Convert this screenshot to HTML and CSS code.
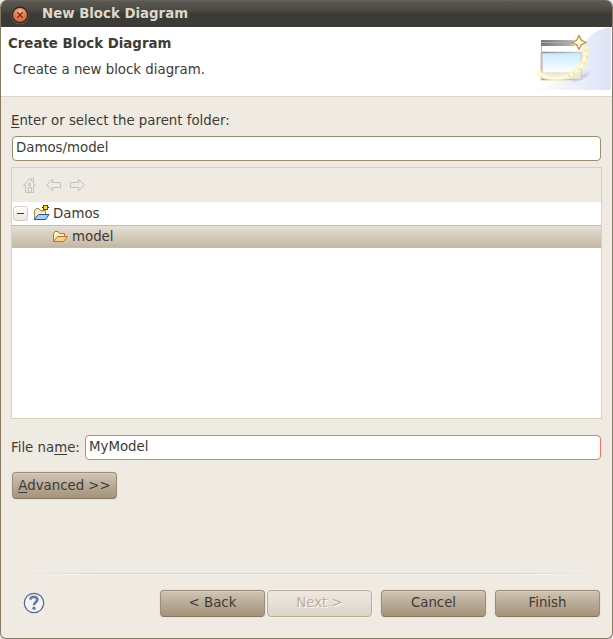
FILE: index.html
```html
<!DOCTYPE html>
<html lang="en">
<head>
<meta charset="utf-8">
<title>New Block Diagram</title>
<link rel="stylesheet" href="styles.css">
</head>
<body>
<main class="window">
  <div class="titlebar">
    <svg class="close" width="20" height="20" viewBox="0 0 20 20">
      <defs><radialGradient id="cl" cx=".5" cy=".25" r=".8"><stop offset="0" stop-color="#ffb894"/><stop offset=".5" stop-color="#f37b50"/><stop offset="1" stop-color="#d65329"/></radialGradient></defs>
      <circle cx="10" cy="10.5" r="8.8" fill="#64605a"/>
      <circle cx="10" cy="10" r="8.4" fill="#2c2a28"/>
      <circle cx="10" cy="10" r="7" fill="url(#cl)"/>
      <path d="M7.3 7.3l5.4 5.4M12.7 7.3l-5.4 5.4" stroke="#5b3b31" stroke-width="1.5"/>
    </svg>
    <span class="title">New Block Diagram</span>
  </div>
  <header class="banner">
    <div>
      <h1>Create Block Diagram</h1>
      <p>Create a new block diagram.</p>
    </div>
    <svg class="art" width="83" height="66" viewBox="0 0 83 66">
      <defs>
        <linearGradient id="bg" x1="0" y1="0" x2="1" y2="0"><stop offset="0" stop-color="#fff"/><stop offset=".55" stop-color="#edf1fb"/><stop offset="1" stop-color="#dbe3f5"/></linearGradient>
        <linearGradient id="bar"><stop offset="0" stop-color="#777"/><stop offset="1" stop-color="#c9c9c9"/></linearGradient>
        <linearGradient id="sky" x1="0" y1="0" x2="0" y2="1"><stop offset="0" stop-color="#c8ecff"/><stop offset="1" stop-color="#fbfeff"/></linearGradient>
        <linearGradient id="fr"><stop offset="0" stop-color="#8e8e8e"/><stop offset="1" stop-color="#cfcfcb"/></linearGradient>
        <filter id="soft" x="-20%" y="-20%" width="140%" height="140%"><feGaussianBlur stdDeviation="1.3"/></filter>
      </defs>
      <path d="M0 63Q36 60 48 31Q58 2 82 0V63Z" fill="url(#bg)"/>
      <path d="M43 53L62 44L57 50L44 55Z" fill="#c9c4dc" filter="url(#soft)"/>
      <rect x="12" y="13" width="41" height="40" fill="#fff"/>
      <rect x="12" y="13" width="41" height="6" fill="url(#bar)"/>
      <path d="M12 15.5H50" stroke="#aaa"/>
      <rect x="12.5" y="25.5" width="40" height="27" fill="#e9e6dc" stroke="url(#fr)" stroke-width="1.5"/>
      <path d="M12.5 19V53" stroke="#bbb"/>
      <rect x="14" y="27" width="37" height="18" fill="url(#sky)"/>
      <path d="M9 45Q17 53 32 51Q58 46 57 20" fill="none" stroke="#fdf5c0" stroke-width="5" filter="url(#soft)"/>
      <path d="M10 46Q18 53 32 51Q57 46 57 22" fill="none" stroke="#fffce0" stroke-width="1.8"/>
      <path d="M57 22v3M55.5 23.5h3M58 29v3M56.5 30.5h3M55 35v3M53.5 36.5h3M50 41v3M48.5 42.5h3M45 45v3M43.5 46.5h3M40 47v3M38.5 48.5h3" stroke="#f6dda0" stroke-width="1.1"/>
      <circle cx="50" cy="15" r="6" fill="#fff6d6" filter="url(#soft)"/>
      <path d="M50 8.5L52.3 13.2L57 15.5L52.3 17.8L50 22.5L47.7 17.8L43 15.5L47.7 13.2Z" fill="#fffbe9" stroke="#bd8b35" stroke-width="1.2"/>
    </svg>
  </header>
  <section class="content">
    <label class="folder-label"><u>E</u>nter or select the parent folder:</label>
    <div class="field">Damos/model</div>
    <div class="browser">
      <div class="tools">
        <svg width="66" height="18" viewBox="0 0 66 18" fill="none" stroke="#c4c1bb">
          <path d="M1.5 9.5L7.5 2.5L13.5 9.5H11.5V16.5H3.5V9.5ZM11.5 6V2.5H9.5V4.5M6.5 16V11.5H9.5V16M6.500 7.500h2v2h-2Z"/>
          <path d="M24.500 9L30.500 3.500V6.500H38.500V11.500H30.500V14.500Z"/>
          <path d="M62.500 9L56.500 3.500V6.500H48.500V11.500H56.500V14.500Z"/>
        </svg>
      </div>
      <div class="row">
        <span class="toggle"></span>
        <svg class="project" width="17" height="16" viewBox="0 0 17 16">
          <path d="M1.5 13.500V5.500L3 3.500H6L7.500 5.500H12.500V9" fill="#f8dfa0" stroke="#aa8b55"/>
          <path d="M3.500 5.500H6L7 7.500H12V9H5L2.500 12Z" fill="#fff2c8"/>
          <path d="M1 14.500L5.500 9.500H16L12.500 14.500Z" fill="#a9ceff" stroke="#2552a5"/>
          <path d="M9 2.500H16" stroke="#222"/><rect x="10.500" y=".5" width="4" height="4" fill="#ffe000" stroke="#65500b"/>
        </svg>
        <span>Damos</span>
      </div>
      <div class="row selected">
        <svg class="folder" width="17" height="14" viewBox="0 0 17 14">
          <path d="M1.500 11.500V3.500L3 1.500H6L7.500 3.500H12.500V6.500" fill="#fff0c4" stroke="#b77725"/>
          <path d="M1.500 11.500L5.500 6.500H15.500L11.500 11.500Z" fill="#fbd28a" stroke="#b77725"/>
        </svg>
        <span>model</span>
      </div>
    </div>
    <div class="file-row">
      <label>File na<u>m</u>e:</label>
      <div class="field invalid">MyModel</div>
    </div>
    <div class="button"><span><u>A</u>dvanced &gt;&gt;</span></div>
  </section>
  <footer>
    <svg class="help" width="22" height="22" viewBox="0 0 22 22">
      <circle cx="11" cy="11" r="9.700" fill="#f5f5f5" stroke="#536790" stroke-width="1.2"/>
      <path d="M7.300 7.500C7.800 3.900 14.600 3.900 14.300 7.900C14.200 10.400 11 10.200 11 13.200" fill="none" stroke="#657cab" stroke-width="2.700"/>
      <circle cx="11" cy="16.200" r="1.700" fill="#657cab"/>
    </svg>
    <div class="button back">&lt; Back</div>
    <div class="button disabled">Next &gt;</div>
    <div class="button cancel">Cancel</div>
    <div class="button finish">Finish</div>
  </footer>
</main>
</body>
</html>
```
FILE: styles.css
```css
* { box-sizing: border-box; }
body { margin: 0; background: #e9e5dd; font: 13.333px/20px "DejaVu Sans", sans-serif; color: #3c3b37; }
.window { width: 613px; height: 639px; display: flex; flex-direction: column; background: #efebe3; border: 1px solid #897960; border-top: 0; border-radius: 7px 7px 6px 6px; overflow: hidden; }
.titlebar { height: 27px; flex: none; display: flex; align-items: center; padding: 1px 0 0 9px; background: linear-gradient(#5b5952, #4b4a44 35%, #3c3b37 50%, #3c3b37); border-top: 1px solid #64625a; color: #dfd8c8; font-weight: bold; }
.title { margin: 0 0 1px 12px; }
.close { margin-top: 1px; }
.banner { height: 70px; flex: none; display: flex; justify-content: space-between; background: #fff; border-bottom: 1px solid #ddd7c8; }
h1 { font-size: 13.333px; line-height: 20px; margin: 7px 0 0 7px; }
p { margin: 6px 0 0 12px; }
u { text-decoration-thickness: 1px; text-underline-offset: 2px; }
.content { padding: 14px 10px 0; display: flex; flex-direction: column; align-items: stretch; }
.folder-label { height: 20px; }
.field { height: 25px; margin: 5px 1px 0; padding: 1px 3px; background: #fff; border: 1px solid #9c8b6c; border-radius: 4px; }
.browser { height: 252px; margin-top: 6px; background: #fff; border: 1px solid #d8cfbd; }
.tools { height: 34px; padding: 8px 0 0 10px; background: #efebe3; }
.row { height: 23px; display: flex; align-items: center; }
.toggle { width: 15px; height: 15px; margin: 0 5px 0 1px; display: flex; align-items: center; justify-content: center; border: 1px solid #d5cdbd; border-radius: 3px; background: linear-gradient(#fff, #ece6da); }
.toggle::before { content: ""; width: 7px; height: 1px; background: #3c3b37; }
.project { margin: -2px 3px 0 0; }
.row.selected { background: linear-gradient(#e6dfd5, #c4b8a4); border-top: 1px solid #c8bdab; border-bottom: 1px solid #c6baa7; }
.folder { margin: 1px 3px 0 40px; }
.file-row { display: flex; align-items: center; height: 25px; margin-top: 16px; }
.file-row label { width: 73px; }
.field.invalid { flex: 1; margin: 0 1px; border-color: #f4745f; }
.button { width: 105px; height: 27px; flex: none; display: flex; justify-content: center; align-items: center; border: 1px solid #9b8c77; border-bottom-color: #857660; border-radius: 4px; background: linear-gradient(#d1c5b5, #b9aa96 50%, #a59479); box-shadow: inset 0 1px #d9cec0, 0 0 0 1px #e9e3d8; }
.content > .button { margin: 12px 0 0 1px; }
footer { position: relative; display: flex; align-items: center; margin-top: auto; height: 65px; padding: 0 12px 5px 22px; }
footer::before { content: ""; position: absolute; top: 0; left: 10px; right: 10px; height: 2px; background: linear-gradient(90deg, #efebe3, transparent 15%, transparent 85%, #efebe3), linear-gradient(#ddd5c6 50%, #f7f4ee 50%); }
.help { margin-right: auto; }
.disabled { margin: 0 9px 0 2px; color: #bcae99; text-shadow: 1px 1px #fff; background: linear-gradient(#eee9e2, #ddd4c6); border-color: #b9ad99; box-shadow: 0 0 0 1px #f5f2ec; }
.cancel { margin-right: 9px; }
```
